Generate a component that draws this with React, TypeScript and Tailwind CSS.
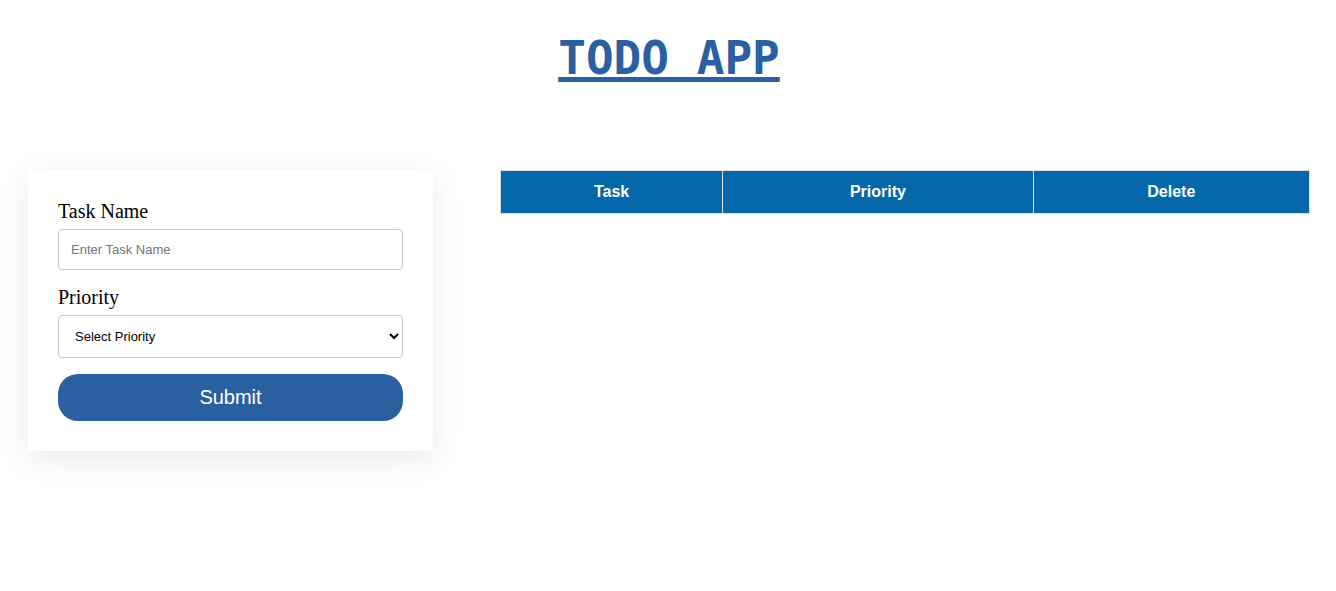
export default function App() {
  return (
    <main className="min-h-screen bg-white pt-[31px] pr-[26px] pl-7 font-['Liberation_Serif',serif] text-black">
      <h1 className="text-center font-['DejaVu_Sans_Mono',monospace] text-[46px] leading-[54px] font-bold text-[#2b60a0] underline decoration-[5px] underline-offset-[3px]">
        TODO APP
      </h1>
      <div className="mt-[85px] flex items-start gap-[67px]">
        <form
          className="w-[405px] shrink-0 bg-white p-[30px] shadow-[0_8px_30px_0_rgba(100,100,111,0.13)]"
          onSubmit={(e) => e.preventDefault()}
        >
          <label htmlFor="task" className="block text-xl leading-[22px]">
            Task Name
          </label>
          <input
            id="task"
            type="text"
            placeholder="Enter Task Name"
            className="mt-[7px] block h-[41px] w-full rounded border border-[#c8c8c8] px-3 font-['Liberation_Sans',sans-serif] text-[13px] placeholder:text-[#757575]"
          />
          <label htmlFor="priority" className="mt-4 block text-xl leading-[22px]">
            Priority
          </label>
          <select
            id="priority"
            className="mt-[7px] block h-[43px] w-full rounded border border-[#c8c8c8] bg-white px-3 font-['Liberation_Sans',sans-serif] text-[13px]"
          >
            <option>Select Priority</option>
            <option>High</option>
            <option>Medium</option>
            <option>Low</option>
          </select>
          <button
            type="submit"
            className="mt-4 block h-[47px] w-full rounded-[20px] bg-[#2b60a0] pb-0.5 font-['Liberation_Sans',sans-serif] text-xl text-white"
          >
            Submit
          </button>
        </form>
        <table className="min-w-0 flex-1 border-collapse font-['Liberation_Sans',sans-serif]">
          <thead>
            <tr className="bg-[#0468ab] text-white">
              <th className="border border-[#dddddd] px-2 py-[9px]">Task</th>
              <th className="border border-[#dddddd] px-2 py-[9px]">Priority</th>
              <th className="border border-[#dddddd] px-2 py-[9px]">Delete</th>
            </tr>
          </thead>
        </table>
      </div>
    </main>
  );
}
